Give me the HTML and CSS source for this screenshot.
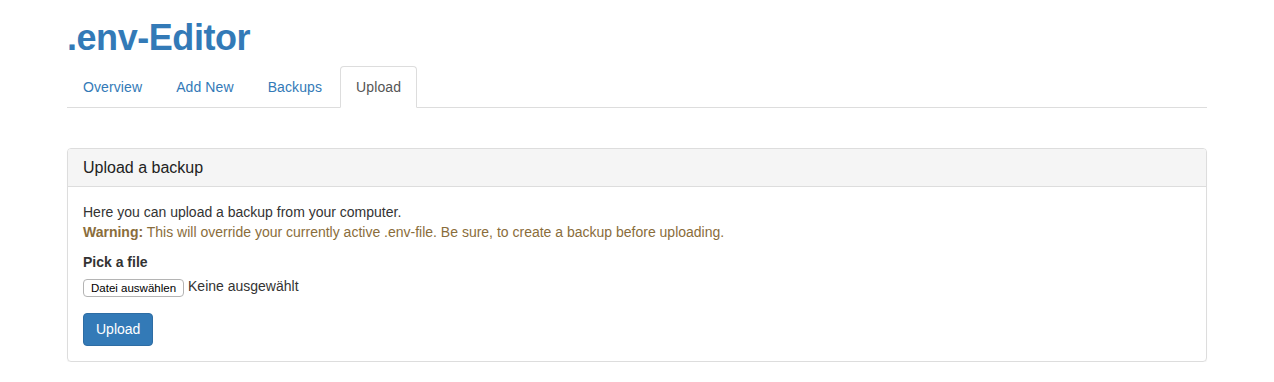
FILE: index.html
```html
<!DOCTYPE html>
<html lang="en">

<head>
    <meta charset="UTF-8">
    <title>.env-Editor</title>
    <link rel="stylesheet" href="styles.css">
</head>

<body>
    <div class="container">
        <h1 class="title">.env-Editor</h1>

        <!-- Tabs -->
        <ul class="nav-tabs">
            <li><a href="#">Overview</a></li>
            <li><a href="#">Add New</a></li>
            <li><a href="#">Backups</a></li>
            <li class="active"><a href="#">Upload</a></li>
        </ul>

        <!-- Upload panel -->
        <div class="panel">
            <div class="panel-heading">
                <h3 class="panel-title">Upload a backup</h3>
            </div>
            <div class="panel-body">
                <p>
                    Here you can upload a backup from your computer.<br>
                    <span class="text-warning"><strong>Warning:</strong> This will override your currently active .env-file. Be sure, to create a backup before uploading.</span>
                </p>
                <form>
                    <div class="form-group">
                        <label class="control-label">Pick a file</label>
                        <div class="file-input">
                            <span class="file-button">Datei auswählen</span>
                            <span class="file-name">Keine ausgewählt</span>
                        </div>
                    </div>
                    <button type="button" class="btn btn-primary">Upload</button>
                </form>
            </div>
        </div>
    </div>
</body>

</html>
```

FILE: styles.css
```css
body {
    margin: 0;
    font-family: "Liberation Sans", Arial, sans-serif;
    font-size: 14px;
    line-height: 20px;
    color: #333;
    background-color: #fff;
}

.container {
    width: 1140px;
    margin: 0 auto;
    padding: 0 15px;
}

.title {
    margin: 18px 0 8px;
    font-size: 36px;
    line-height: 1.1;
    font-weight: 700;
    letter-spacing: -0.45px;
    color: #337ab7;
}

/* Tabs */
.nav-tabs {
    display: flex;
    margin: 0;
    padding: 0;
    list-style: none;
    border-bottom: 1px solid #ddd;
}

.nav-tabs li {
    margin-right: 2px;
    margin-bottom: -1px;
}

.nav-tabs a {
    display: block;
    padding: 10px 15px;
    line-height: 20px;
    color: #337ab7;
    text-decoration: none;
    border: 1px solid transparent;
    border-radius: 4px 4px 0 0;
    letter-spacing: 0.1px;
}

.nav-tabs .active a {
    color: #555;
    background-color: #fff;
    border-color: #ddd #ddd transparent;
}

/* Panel */
.panel {
    margin-top: 40px;
    border: 1px solid #ddd;
    border-radius: 4px;
    box-shadow: 0 1px 1px rgba(0, 0, 0, 0.05);
}

.panel-heading {
    padding: 10px 15px;
    background-color: #f5f5f5;
    border-bottom: 1px solid #ddd;
    border-radius: 3px 3px 0 0;
}

.panel-title {
    margin: 0;
    font-size: 16px;
    line-height: 1.1;
    font-weight: 500;
    color: #222;
}

.panel-body {
    padding: 15px;
}

.panel-body p {
    margin: 0 0 10px;
}

.text-warning {
    color: #8a6d3b;
}

.form-group {
    margin-bottom: 15px;
}

.control-label {
    display: block;
    margin-bottom: 5px;
    font-weight: 700;
}

.file-input {
    display: flex;
    align-items: center;
    height: 21px;
}

.file-button {
    padding: 0 7px;
    height: 16px;
    line-height: 16px;
    font-size: 11.5px;
    color: #000;
    background-color: #fff;
    border: 1px solid #b4b4b4;
    border-radius: 4px;
    margin-top: 1px;
}

.file-name {
    margin-left: 4px;
    margin-top: -4px;
    font-size: 14px;
}

.btn {
    padding: 6px 12px;
    font-family: inherit;
    font-size: 14px;
    line-height: 19px;
    border: 1px solid transparent;
    border-radius: 4px;
    cursor: pointer;
}

.btn-primary {
    color: #fff;
    background-color: #337ab7;
    border-color: #2e6da4;
}

.btn-primary:hover {
    background-color: #286090;
}
```
